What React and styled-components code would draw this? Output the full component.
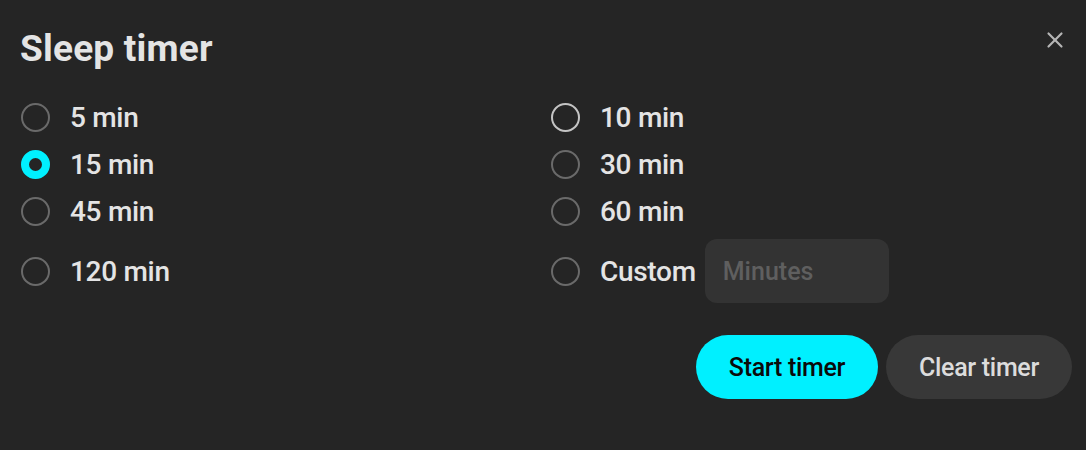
import React, { useState } from "react";
import styled, { createGlobalStyle } from "styled-components";
import { X } from "lucide-react";

const GlobalStyle = createGlobalStyle`
  html, body {
    margin: 0;
    padding: 0;
    background: #252525;
  }
  body {
    font-family: Roboto, "Liberation Sans", sans-serif;
  }
`;

const Dialog = styled.div`
  position: relative;
  box-sizing: border-box;
  width: 1086px;
  height: 450px;
  padding: 20px 14px 20px 20px;
  background: #252525;
  color: #e4e4e4;
`;

const Title = styled.h2`
  margin: 0;
  height: 56px;
  line-height: 58px;
  font-size: 37px;
  font-weight: 700;
  letter-spacing: 0.2px;
`;

const CloseButton = styled.button`
  position: absolute;
  top: 25px;
  right: 16px;
  width: 30px;
  height: 30px;
  display: flex;
  align-items: center;
  justify-content: center;
  padding: 0;
  border: none;
  background: transparent;
  color: #b5b5b5;
  cursor: pointer;
`;

const Options = styled.div`
  display: grid;
  grid-template-columns: 530px 1fr;
  row-gap: 4px;
  align-items: center;
  margin-top: 20px;
`;

const Option = styled.label`
  display: flex;
  align-items: center;
  min-height: 43px;
  margin-top: ${({ $spaced }) => ($spaced ? "2px" : "0")};
  cursor: pointer;
`;

const Radio = styled.span`
  box-sizing: border-box;
  width: 29px;
  height: 29px;
  border-radius: 50%;
  flex-shrink: 0;
  margin-left: 1px;
  border: ${({ $checked }) => ($checked ? "8px solid" : "2px solid")};
  border-color: ${({ $checked, $hover }) =>
    $checked ? "#00f0ff" : $hover ? "#c4c4c4" : "#6a6a6a"};
  background: #252525;
`;

const OptionText = styled.span`
  margin-left: 20px;
  font-size: 28px;
  font-weight: 500;
  letter-spacing: -0.3px;
  color: #e4e4e4;
`;

const MinutesInput = styled.input`
  box-sizing: border-box;
  width: 184px;
  height: 64px;
  margin-left: 9px;
  padding: 0 18px;
  border: none;
  border-radius: 12px;
  background: #333333;
  color: #e4e4e4;
  font-family: inherit;
  font-size: 25px;
  font-weight: 500;
  outline: none;
  &::placeholder {
    color: #5f5f5f;
  }
`;

const Actions = styled.div`
  display: flex;
  justify-content: flex-end;
  gap: 8px;
  margin-top: 32px;
`;

const ActionButton = styled.button`
  height: 64px;
  padding: 0 30px;
  min-width: ${({ $primary }) => ($primary ? "182px" : "186px")};
  border: none;
  border-radius: 32px;
  background: ${({ $primary }) => ($primary ? "#00f0ff" : "#383838")};
  color: ${({ $primary }) => ($primary ? "#0a0a0a" : "#dcdcdc")};
  font-family: inherit;
  font-size: 25px;
  font-weight: 500;
  letter-spacing: -0.3px;
  cursor: pointer;
`;

const choices = [
  { value: 5, label: "5 min" },
  { value: 10, label: "10 min", hover: true },
  { value: 15, label: "15 min" },
  { value: 30, label: "30 min" },
  { value: 45, label: "45 min" },
  { value: 60, label: "60 min" },
  { value: 120, label: "120 min", spaced: true },
];

export default function App() {
  const [selected, setSelected] = useState(15);

  return (
    <>
      <GlobalStyle />
      <Dialog>
        <Title>Sleep timer</Title>
        <CloseButton aria-label="Close">
          <X size={26} strokeWidth={2} />
        </CloseButton>

        <Options>
          {choices.map((c) => (
            <Option
              key={c.value}
              $spaced={c.spaced}
              onClick={() => setSelected(c.value)}
            >
              <Radio $checked={selected === c.value} $hover={c.hover} />
              <OptionText>{c.label}</OptionText>
            </Option>
          ))}
          <Option $spaced onClick={() => setSelected("custom")}>
            <Radio $checked={selected === "custom"} />
            <OptionText>Custom</OptionText>
            <MinutesInput placeholder="Minutes" />
          </Option>
        </Options>

        <Actions>
          <ActionButton $primary>Start timer</ActionButton>
          <ActionButton>Clear timer</ActionButton>
        </Actions>
      </Dialog>
    </>
  );
}
